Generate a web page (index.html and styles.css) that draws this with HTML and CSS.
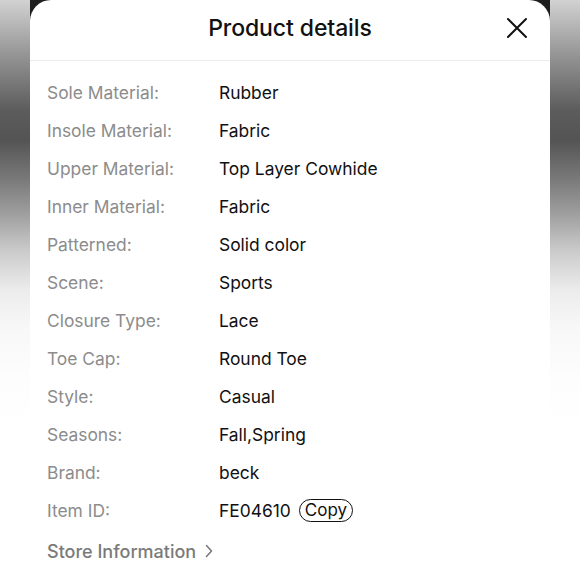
FILE: index.html
```html
<!DOCTYPE html>
<html>
<head>
<meta charset="utf-8">
<link rel="stylesheet" href="styles.css">
</head>
<body>
<div class="stage">
  <div class="sheet">
    <div class="header">
      <div class="title">Product details</div>
      <svg class="close" width="22" height="22" viewBox="0 0 22 22"><path d="M2 2 L20 20 M20 2 L2 20" stroke="#111" stroke-width="2" stroke-linecap="round"/></svg>
    </div>
    <div class="list">
      <div class="row"><span class="label">Sole Material:</span><span class="value">Rubber</span></div>
      <div class="row"><span class="label">Insole Material:</span><span class="value">Fabric</span></div>
      <div class="row"><span class="label">Upper Material:</span><span class="value">Top Layer Cowhide</span></div>
      <div class="row"><span class="label">Inner Material:</span><span class="value">Fabric</span></div>
      <div class="row"><span class="label">Patterned:</span><span class="value">Solid color</span></div>
      <div class="row"><span class="label">Scene:</span><span class="value">Sports</span></div>
      <div class="row"><span class="label">Closure Type:</span><span class="value">Lace</span></div>
      <div class="row"><span class="label">Toe Cap:</span><span class="value">Round Toe</span></div>
      <div class="row"><span class="label">Style:</span><span class="value">Casual</span></div>
      <div class="row"><span class="label">Seasons:</span><span class="value">Fall,Spring</span></div>
      <div class="row"><span class="label">Brand:</span><span class="value">beck</span></div>
      <div class="row"><span class="label">Item ID:</span><span class="value">FE04610 <span class="copy">Copy</span></span></div>
    </div>
    <div class="store">Store Information <svg class="chev" width="8" height="14" viewBox="0 0 8 14"><path d="M1.5 1.5 L6.5 7 L1.5 12.5" fill="none" stroke="#777" stroke-width="1.5" stroke-linecap="round" stroke-linejoin="round"/></svg></div>
  </div>
</div>
</body>
</html>
```
FILE: styles.css
```css
html, body {
  margin: 0;
  padding: 0;
}
body {
  width: 580px;
  height: 580px;
  overflow: hidden;
  font-family: Inter, "Liberation Sans", sans-serif;
  background: linear-gradient(to bottom, #d2d2d2 0px, #9a9a9a 50px, #5c5c5c 110px, #545454 140px, #7a7a7a 180px, #a0a0a0 215px, #cacaca 250px, #ececec 290px, #f8f8f8 330px, #fdfdfd 380px, #ffffff 430px);
}
.stage {
  margin: 0 30px;
  height: 580px;
  background: linear-gradient(to bottom, #1e1e1e 0px, #1e1e1e 22px, transparent 22px);
}
.sheet {
  height: 580px;
  background: #fff;
  border-radius: 21px 21px 0 0;
}
.header {
  height: 60px;
  border-bottom: 1px solid #ececec;
  display: flex;
  align-items: center;
  justify-content: center;
  position: relative;
}
.title {
  font-size: 23px;
  font-weight: 500;
  color: #111;
  letter-spacing: -0.1px;
  margin-top: -5px;
}
.close {
  position: absolute;
  right: 22px;
  top: 17px;
}
.list {
  padding: 12px 0 0 17px;
}
.row {
  height: 38px;
  display: flex;
  align-items: center;
  font-size: 17.4px;
}
.label {
  width: 172px;
  color: #8c8c8c;
}
.value {
  color: #111;
  display: flex;
  align-items: center;
  gap: 8px;
}
.copy {
  border: 1.6px solid #111;
  border-radius: 12px;
  padding: 0 5px;
  height: 21px;
  line-height: 21px;
  font-size: 17px;
}
.store {
  padding: 3px 0 0 17px;
  height: 38px;
  display: flex;
  align-items: center;
  gap: 9px;
  font-size: 18px;
  font-weight: 500;
  color: #7a7a7a;
}
```
